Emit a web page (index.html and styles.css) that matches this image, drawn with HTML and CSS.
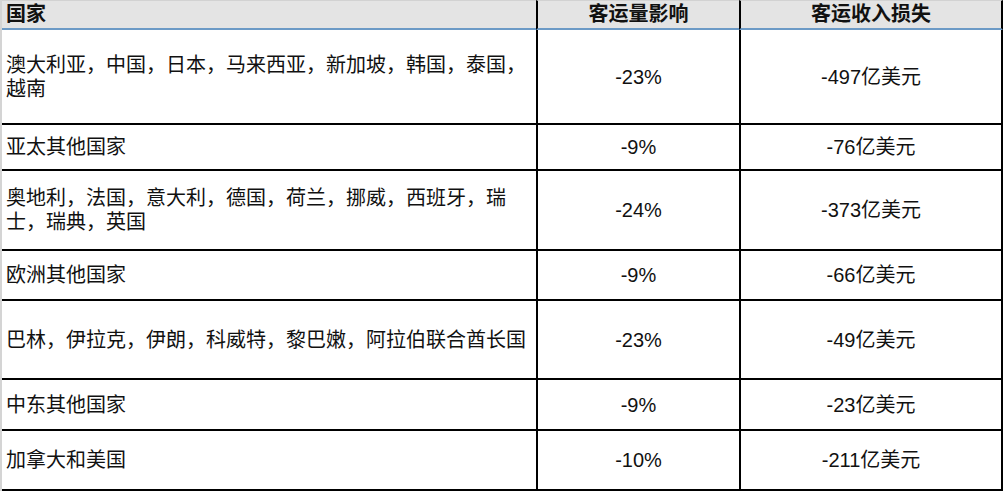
FILE: index.html
```html
<!DOCTYPE html>
<html lang="zh-CN">
<head>
<meta charset="utf-8">
<title>客运影响</title>
<link rel="stylesheet" href="styles.css">
</head>
<body>
<table class="grid">
  <colgroup>
    <col class="c1"><col class="c2"><col class="c3">
  </colgroup>
  <thead>
    <tr class="head">
      <th class="name">国家</th>
      <th class="num">客运量影响</th>
      <th class="num last">客运收入损失</th>
    </tr>
  </thead>
  <tbody>
    <tr class="h93">
      <td class="name">澳大利亚，中国，日本，马来西亚，新加坡，韩国，泰国，<br>越南</td>
      <td class="num">-23%</td>
      <td class="num last">-497亿美元</td>
    </tr>
    <tr class="h44">
      <td class="name">亚太其他国家</td>
      <td class="num">-9%</td>
      <td class="num last">-76亿美元</td>
    </tr>
    <tr class="h78">
      <td class="name">奥地利，法国，意大利，德国，荷兰，挪威，西班牙，瑞<br>士，瑞典，英国</td>
      <td class="num">-24%</td>
      <td class="num last">-373亿美元</td>
    </tr>
    <tr class="h48">
      <td class="name">欧洲其他国家</td>
      <td class="num">-9%</td>
      <td class="num last">-66亿美元</td>
    </tr>
    <tr class="h77">
      <td class="name">巴林，伊拉克，伊朗，科威特，黎巴嫩，阿拉伯联合酋长国</td>
      <td class="num">-23%</td>
      <td class="num last">-49亿美元</td>
    </tr>
    <tr class="h49">
      <td class="name">中东其他国家</td>
      <td class="num">-9%</td>
      <td class="num last">-23亿美元</td>
    </tr>
    <tr class="h58">
      <td class="name">加拿大和美国</td>
      <td class="num">-10%</td>
      <td class="num last">-211亿美元</td>
    </tr>
  </tbody>
</table>
</body>
</html>
```
FILE: styles.css
```css
html, body {
  margin: 0;
  padding: 0;
  background: #ffffff;
}
body {
  width: 1003px;
  height: 492px;
  overflow: hidden;
  font-family: "Liberation Sans", "Noto Sans CJK SC", sans-serif;
  font-size: 20px;
  color: #111111;
}
.grid {
  width: 1003px;
  border-collapse: separate;
  border-spacing: 0;
  table-layout: fixed;
  border-left: 2px solid #d4d4d4;
}
.c1 { width: 534px; }
.c2 { width: 203px; }
.c3 { width: 264px; }

th, td {
  padding: 0 0 0 4px;
  vertical-align: middle;
  line-height: 24px;
  font-weight: normal;
  border-bottom: 2px solid #000000;
}
.num {
  text-align: center;
  padding: 0;
  border-left: 2px solid #000000;
}
.last {
  border-right: 2px solid #000000;
}
.name {
  text-align: left;
}
.head th {
  height: 27px;
  font-weight: bold;
  background: #e4e4e4;
  border-top: 1px solid #d2d2d2;
  border-bottom: 2px solid #6c9ac6;
  line-height: 27px;
  padding-top: 0;
}
.head th.name { padding-left: 4px; }
.head th.num { border-left: 2px solid #000000; }
.head th.last { border-right: 2px solid #000000; }

.h93 td { height: 93px; }
.h44 td { height: 44px; }
.h78 td { height: 78px; }
.h48 td { height: 48px; }
.h77 td { height: 77px; }
.h49 td { height: 49px; }
.h58 td { height: 58px; }
```
